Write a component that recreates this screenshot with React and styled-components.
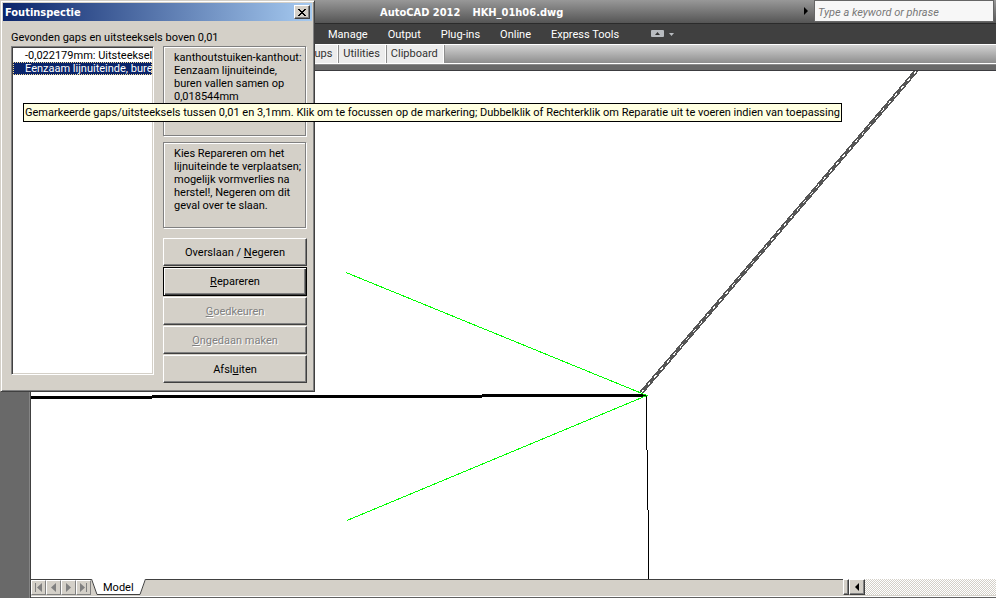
import React, { useState } from "react";
import styled, { createGlobalStyle, css } from "styled-components";

const menuItems = ["Manage", "Output", "Plug-ins", "Online", "Express Tools"];
const panels = ["Groups", "Utilities", "Clipboard"];

const findings = [
  { id: "gap-1", text: "-0,022179mm: Uitsteeksel" },
  { id: "gap-2", text: "Eenzaam lijnuiteinde, buren" },
];

const navIcons = [
  { label: "Eerste", d: "M2 1h1v9h-1z M9 1v9L4 5.5z" },
  { label: "Vorige", d: "M8 1v9L3 5.5z" },
  { label: "Volgende", d: "M3 1v9L8 5.5z" },
  { label: "Laatste", d: "M2 1v9L7 5.5z M8 1h1v9h-1z" },
];

const Drawing = () => (
  <Canvas viewBox="31 71 965 508" preserveAspectRatio="xMinYMin slice">
    <g shapeRendering="crispEdges" fill="none">
      <path d="M641 393L917 70" stroke="#555" strokeWidth="4" />
      <path
        d="M641 393L917 70"
        stroke="#fff"
        strokeWidth="1"
        strokeDasharray="4 6"
      />
      <path d="M31 397.5H152M152 396.5H482M482 395.5H646" stroke="#000" strokeWidth="3" />
      <path d="M646.5 395V450M647.5 450V510M648.5 510V579" stroke="#000" />
      <path d="M346 272.5L647 395.5L347 520.5" stroke="#0f0" />
    </g>
  </Canvas>
);

const Dialog = () => {
  const [selected, setSelected] = useState("gap-2");
  return (
    <DialogFrame role="dialog" aria-labelledby="dialog-title">
      <DialogTitle>
        <h2 id="dialog-title">Foutinspectie</h2>
        <CloseButton type="button" aria-label="Sluiten">
          <svg width="8" height="7" viewBox="0 0 8 7" shapeRendering="crispEdges">
            <path
              d="M0 0h2v1h1v1h2v-1h1v-1h2v1h-1v1h-1v1h-1v1h1v1h1v1h1v1h-2v-1h-1v-1h-2v1h-1v1h-2v-1h1v-1h1v-1h1v-1h-1v-1h-1v-1h-1z"
              fill="#000"
            />
          </svg>
        </CloseButton>
      </DialogTitle>
      <DialogBody>
        <ListLabel htmlFor="findings">
          Gevonden gaps en uitsteeksels boven 0,01
        </ListLabel>
        <Columns>
          <FindingList
            id="findings"
            size={2}
            value={selected}
            onChange={(e) => setSelected(e.target.value)}
          >
            {findings.map(({ id, text }) => (
              <option key={id} value={id}>
                {text}
              </option>
            ))}
          </FindingList>
          <Side>
            <Info $height="90px">
              kanthoutstuiken-kanthout:
              <br />
              Eenzaam lijnuiteinde,
              <br />
              buren vallen samen op
              <br />
              0,018544mm
            </Info>
            <Info $height="86px">
              Kies Repareren om het
              <br />
              lijnuiteinde te verplaatsen;
              <br />
              mogelijk vormverlies na
              <br />
              herstel!, Negeren om dit
              <br />
              geval over te slaan.
            </Info>
            <Actions>
              <Action type="button">
                Overslaan / <u>N</u>egeren
              </Action>
              <Action type="button" $primary>
                <u>R</u>epareren
              </Action>
              <Action type="button" disabled>
                <u>G</u>oedkeuren
              </Action>
              <Action type="button" disabled>
                <u>O</u>ngedaan maken
              </Action>
              <Action type="button">
                Afsl<u>u</u>iten
              </Action>
            </Actions>
          </Side>
        </Columns>
      </DialogBody>
    </DialogFrame>
  );
};

const App = () => (
  <Page>
    <GlobalStyle />
    <TitleBar>
      <Title>
        <span>AutoCAD 2012</span>
        <span>HKH_01h06.dwg</span>
      </Title>
      <svg width="4" height="8" viewBox="0 0 4 8">
        <path d="M0 0L4 4L0 8z" fill="#000" />
      </svg>
      <Search type="text" aria-label="Search" placeholder="Type a keyword or phrase" />
    </TitleBar>
    <Menu>
      {menuItems.map((item) => (
        <MenuButton type="button" key={item}>
          {item}
        </MenuButton>
      ))}
      <MenuButton type="button" aria-label="Minimize ribbon" $icon>
        <svg width="24" height="8" viewBox="0 0 24 8">
          <rect width="13" height="7" rx="1" fill="#b9bcc0" />
          <path d="M4 5L6.5 2L9 5z" fill="#333" />
          <path d="M18 3h5L20.5 6z" fill="#b9bcc0" />
        </svg>
      </MenuButton>
    </Menu>
    <Ribbon>
      {panels.map((panel) => (
        <Panel type="button" key={panel}>
          {panel}
        </Panel>
      ))}
    </Ribbon>
    <Divider />
    <Workspace>
      <Gutter />
      <Sheet>
        <Drawing />
        <BottomBar>
          <Tabs>
            {navIcons.map(({ label, d }) => (
              <NavButton type="button" key={label} aria-label={label}>
                <svg width="11" height="11" viewBox="0 0 11 11">
                  <path d={d} fill="#808080" />
                </svg>
              </NavButton>
            ))}
            <ModelTab type="button">
              <svg width="7" height="16" viewBox="0 0 7 16">
                <path d="M0 0H7V16H6z" fill="#fff" />
                <path d="M0.5 0L6 15.5H7" fill="none" stroke="#404040" />
              </svg>
              <span>Model</span>
              <svg width="7" height="16" viewBox="0 0 7 16">
                <path d="M0 0H7L1 16H0z" fill="#fff" />
                <path d="M0 15.5H1L6.5 0" fill="none" stroke="#404040" />
              </svg>
            </ModelTab>
          </Tabs>
          <Splitter />
          <ScrollButton type="button" aria-label="Scroll left">
            <svg width="4" height="8" viewBox="0 0 4 8">
              <path d="M4 0V8L0 4z" fill="#000" />
            </svg>
          </ScrollButton>
          <ScrollTrack />
        </BottomBar>
      </Sheet>
    </Workspace>
    <Dialog />
    <Tooltip role="tooltip">
      Gemarkeerde gaps/uitsteeksels tussen 0,01 en 3,1mm. Klik om te focussen op
      de markering; Dubbelklik of Rechterklik om Reparatie uit te voeren indien
      van toepassing
    </Tooltip>
  </Page>
);

const GlobalStyle = createGlobalStyle`
  * {
    box-sizing: border-box;
  }
  body {
    margin: 0;
    overflow: hidden;
  }
  body, button, input, select {
    font-family: Tahoma, Roboto, sans-serif;
    font-size: 11px;
    line-height: 13px;
  }
  h1, h2 {
    margin: 0;
    color: #fff;
    font-family: Tahoma, "DejaVu Sans Condensed", "DejaVu Sans", sans-serif;
    font-stretch: condensed;
    font-size: 11px;
    font-weight: bold;
    line-height: 13px;
  }
  button {
    padding: 0;
    border: 0;
    color: #000;
  }
  svg {
    flex-shrink: 0;
  }
`;

const raised = css`
  background: #d4d0c8;
  border: 1px solid;
  border-color: #fff #404040 #404040 #fff;
  box-shadow: inset -1px -1px 0 #808080;
`;

const Page = styled.div`
  position: relative;
  display: flex;
  flex-direction: column;
  height: 100vh;
  background: #696969;
`;

const TitleBar = styled.header`
  display: flex;
  align-items: flex-start;
  height: 24px;
  padding-right: 2px;
  border-bottom: 1px solid #2b2b2b;
  background: linear-gradient(#989898, #555);
  & > svg {
    margin: 7px 6px 0 0;
  }
`;

const Title = styled.h1`
  display: flex;
  flex: 1;
  gap: 12px;
  padding: 6px 0 0 380px;
`;

const Search = styled.input`
  width: 180px;
  height: 22px;
  padding: 2px 3px 0;
  border: 1px solid #666;
  background: #f7f7f7;
  font-style: italic;
  &::placeholder {
    color: #777;
  }
`;

const Menu = styled.nav`
  display: flex;
  align-items: center;
  gap: 20px;
  height: 20px;
  padding-left: 328px;
  background: #404040;
`;

const MenuButton = styled.button`
  height: 20px;
  margin-left: ${({ $icon }) => ($icon ? "12px" : "0")};
  background: none;
  color: #fff;
`;

const Ribbon = styled.div`
  display: flex;
  gap: 1px;
  height: 20px;
  padding-left: 293px;
  border: solid #fff;
  border-width: 1px 0;
  background: linear-gradient(#d2d2d2, #8e8e8e);
`;

const Panel = styled.button`
  padding: 0 5px 2px 4px;
  border-right: 1px solid #fff;
  background: #ececec;
  color: #333;
  box-shadow: 1px 0 0 #8e8e8e;
`;

const Divider = styled.div`
  height: 7px;
  border-top: 1px solid #8a8a8a;
  border-bottom: 1px solid #3c3c40;
  background: #696969;
`;

const Workspace = styled.main`
  display: flex;
  flex: 1;
  min-height: 0;
`;

const Gutter = styled.div`
  width: 31px;
  border-right: 1px solid #404040;
  background: #696969;
  box-shadow: inset -1px 0 0 #858585;
`;

const Sheet = styled.section`
  display: flex;
  flex: 1;
  flex-direction: column;
  min-width: 0;
  border-bottom: 1px solid #606060;
`;

const Canvas = styled.svg`
  display: block;
  flex: 1;
  width: 100%;
  min-height: 0;
  background: #fff;
`;

const BottomBar = styled.footer`
  display: flex;
  height: 18px;
  border-bottom: 1px solid #fff;
  background: #d4d0c8;
`;

const Tabs = styled.div`
  display: flex;
  flex: 0 1 812px;
  border-top: 1px solid #404040;
`;

const NavButton = styled.button`
  display: flex;
  align-items: center;
  justify-content: center;
  width: 15px;
  height: 15px;
  border: 1px solid;
  border-color: #fff #808080 #808080 #fff;
  background: #d4d0c8;
`;

const ModelTab = styled.button`
  display: flex;
  height: 16px;
  margin-top: -1px;
  background: none;
  & > span {
    padding: 2px 5px 0;
    border-bottom: 1px solid #404040;
    background: #fff;
  }
`;

const Splitter = styled.div`
  ${raised}
  width: 6px;
  height: 16px;
`;

const ScrollButton = styled.button`
  ${raised}
  display: flex;
  align-items: center;
  justify-content: center;
  width: 16px;
  height: 16px;
`;

const ScrollTrack = styled.div`
  flex: 1;
  height: 16px;
  background: repeating-conic-gradient(#d4d0c8 0 25%, #fff 0 50%) 0 0 / 2px 2px;
`;

/* floats over the drawing like a desktop window */
const DialogFrame = styled.section`
  position: absolute;
  top: 0;
  left: 0;
  width: 315px;
  padding: 2px;
  border: 1px solid;
  border-color: #d4d0c8 #404040 #404040 #d4d0c8;
  background: #d4d0c8;
  box-shadow: inset 1px 1px 0 #fff, inset -1px -1px 0 #808080;
`;

const DialogTitle = styled.div`
  display: flex;
  align-items: center;
  justify-content: space-between;
  height: 18px;
  padding: 0 2px;
  background: linear-gradient(to right, #0a246a, #a6caf0);
`;

const CloseButton = styled.button`
  ${raised}
  display: flex;
  align-items: center;
  justify-content: center;
  width: 16px;
  height: 14px;
`;

const DialogBody = styled.div`
  padding: 10px 5px 6px 8px;
`;

const ListLabel = styled.label`
  display: block;
  height: 15px;
`;

const Columns = styled.div`
  display: flex;
  gap: 9px;
`;

const FindingList = styled.select`
  width: 143px;
  height: 329px;
  padding: 0;
  border: 1px solid;
  border-color: #808080 #fff #fff #808080;
  border-radius: 0;
  outline: none;
  overflow: hidden;
  background: #fff;
  box-shadow: inset 1px 1px 0 #404040, inset -1px -1px 0 #d4d0c8;
  & option {
    min-height: 13px;
    margin: 0 1px;
    padding: 0 0 0 12px;
    border-radius: 0;
    color: #000;
    line-height: 13px;
    overflow: hidden;
  }
  & option:first-child {
    margin-top: 2px;
  }
  & option:checked {
    background: #0a246a linear-gradient(#0a246a, #0a246a);
    color: #fff;
    outline: 1px dotted #f5db95;
    outline-offset: -1px;
  }
`;

const Side = styled.div`
  flex: 1;
  min-width: 0;
`;

const Info = styled.p`
  height: ${({ $height }) => $height};
  margin: 0 1px 6px 0;
  padding: 4px 0 0 10px;
  border: 1px solid #808080;
  box-shadow: 1px 1px 0 #fff, inset 1px 1px 0 #fff;
  white-space: nowrap;
`;

const Actions = styled.div`
  display: grid;
  gap: 1px;
  padding-top: 4px;
`;

const Action = styled.button`
  ${raised}
  height: ${({ $primary }) => ($primary ? "29px" : "28px")};
  ${({ $primary }) =>
    $primary &&
    css`
      border-color: #000;
      box-shadow: inset 1px 1px 0 #fff, inset -1px -1px 0 #404040,
        inset -2px -2px 0 #808080;
    `}
  &:disabled {
    color: #808080;
    text-shadow: 1px 1px 0 #fff;
  }
`;

const Tooltip = styled.div`
  position: absolute;
  top: 103px;
  left: 23px;
  padding: 2px 1px;
  border: 1px solid #000;
  background: #ffffe1;
  white-space: nowrap;
`;

export default App;
